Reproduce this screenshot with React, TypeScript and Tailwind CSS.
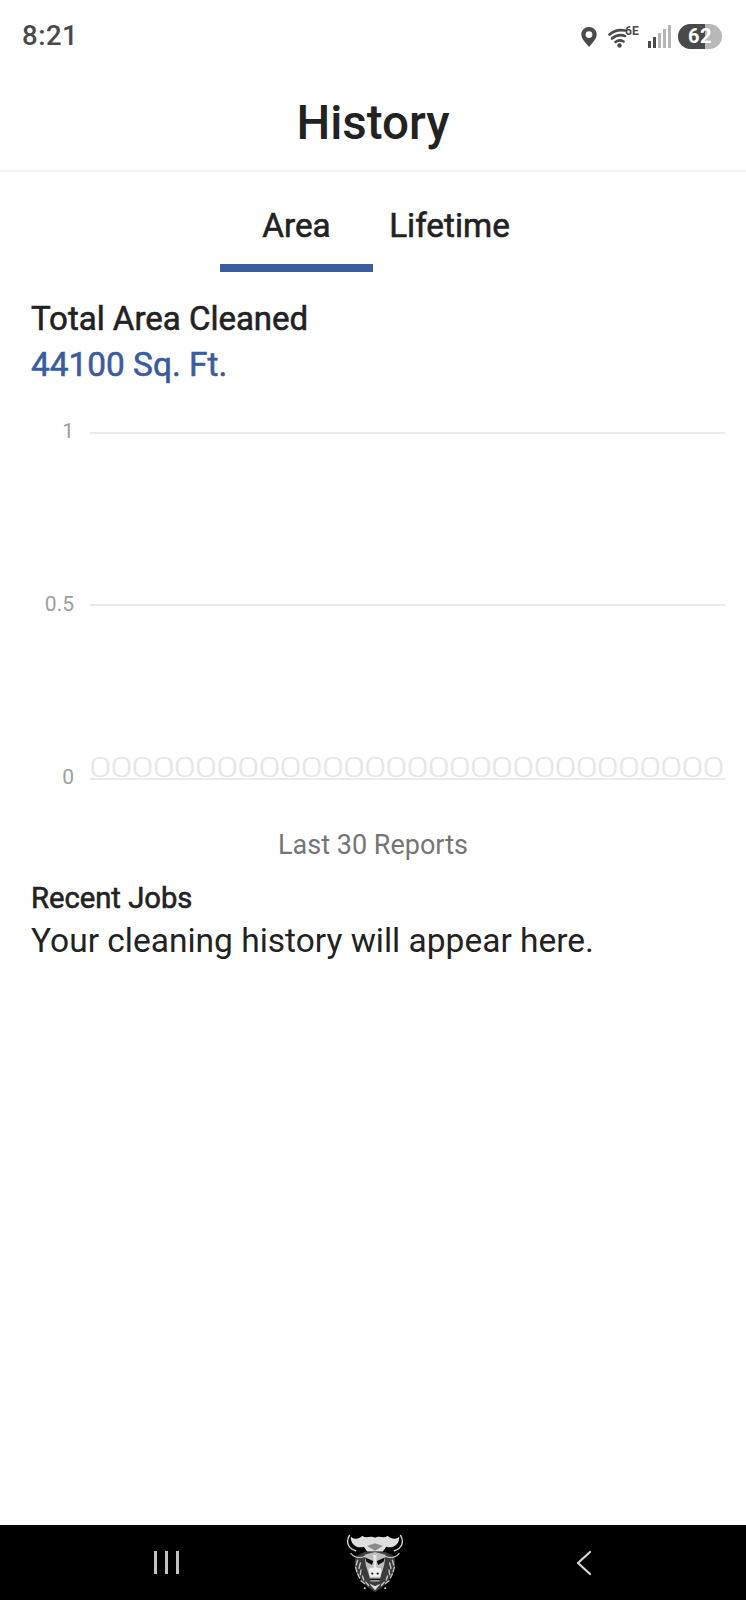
import React from 'react';

const FONT = { fontFamily: 'Roboto, "Noto Sans", sans-serif' };

const BLUE = '#3a5c9f';
const ZEROS = Array.from({ length: 30 }, (_, i) => i);

function StatusIcons() {
  return (
    <div className="flex items-center">
      {/* pin */}
      <svg width="18" height="22" viewBox="0 0 18 22" className="mr-[10px] mt-[1px]">
        <path
          fillRule="evenodd"
          d="M9 1C4.6 1 1.3 4.3 1.3 8.6c0 2.8 1.7 5.2 3.5 7.5L9 21l4.2-4.9c1.8-2.3 3.5-4.7 3.5-7.5C16.7 4.3 13.4 1 9 1zm0 11a3.4 3.4 0 1 1 0-6.8 3.4 3.4 0 0 1 0 6.8z"
          fill="#4a4a4a"
        />
      </svg>
      {/* wifi 6E */}
      <div className="relative w-[34px] h-[24px] mr-[6px]">
        <svg width="22" height="20" viewBox="0 0 22 20" className="absolute left-0 top-[4px]">
          <g fill="none" stroke="#4a4a4a" strokeWidth="2.6" strokeLinecap="round">
            <path d="M1.5 6.5C6 2.5 12 1.5 17 2.5" />
            <path d="M4 10.5C8 7 13 6.5 17 8" />
            <path d="M7.5 14C10 12 13 12 15.5 13.5" />
          </g>
          <circle cx="11.5" cy="17.5" r="2.2" fill="#4a4a4a" />
        </svg>
        <span className="absolute left-[17px] top-[0px] text-[12px] leading-[14px] font-bold text-[#4a4a4a]">6E</span>
      </div>
      {/* signal */}
      <svg width="23" height="23" viewBox="0 0 23 23" className="mr-[7px]">
        <rect x="0" y="16" width="3" height="7" fill="#4a4a4a" />
        <rect x="5" y="12" width="3" height="11" fill="#4a4a4a" />
        <rect x="10" y="8" width="3" height="15" fill="#b5b5b5" />
        <rect x="15" y="4" width="3" height="19" fill="#b5b5b5" />
        <rect x="20" y="0" width="3" height="23" fill="#b5b5b5" />
      </svg>
      {/* battery */}
      <div className="relative w-[44px] h-[25px] rounded-full bg-[#b8b8b8] overflow-hidden">
        <div className="absolute left-0 top-0 bottom-0 w-[27px] bg-[#4a4a4a]" />
        <span className="absolute inset-0 flex items-center justify-center text-[20px] font-bold tracking-[0.5px] text-white leading-none">62</span>
      </div>
    </div>
  );
}

function Chart() {
  const lines = [
    { y: 44, label: '1', dy: 5 },
    { y: 216, label: '0.5', dy: 6 },
    { y: 390, label: '0', dy: 5 },
  ];
  return (
    <svg width="746" height="435" viewBox="0 0 746 435" className="block">
      {lines.map((l) => (
        <g key={l.label}>
          <line x1="90" x2="725" y1={l.y} y2={l.y} stroke="#ebebeb" strokeWidth="2" />
          <text x="74" y={l.y + l.dy} textAnchor="end" fontSize="21" fill="#9e9e9e" style={FONT}>
            {l.label}
          </text>
        </g>
      ))}
      {ZEROS.map((i) => (
        <text
          key={i}
          transform={`translate(${89 + i * 21.15} 388) scale(1.5 1)`}
          fontSize="27"
          fontWeight="300"
          fill="#e6e6e6"
          style={FONT}
        >
          0
        </text>
      ))}
    </svg>
  );
}

const MANE_STROKES: [number, number, number, number][] = [
  [84, 104, 80, 118], [92, 112, 88, 128], [78, 124, 82, 138], [94, 132, 92, 146],
  [84, 144, 90, 156], [98, 150, 102, 162], [94, 164, 104, 172], [108, 168, 116, 178],
  [186, 104, 190, 118], [178, 112, 182, 128], [192, 124, 188, 138], [176, 132, 178, 146],
  [186, 144, 180, 156], [172, 150, 168, 162], [176, 164, 166, 172], [162, 168, 154, 178],
];

function BullLogo() {
  return (
    <svg width="58" height="60" viewBox="50 24 170 176">
      {/* mane silhouette */}
      <path d="M78 92C70 130 88 168 135 198C182 168 200 130 192 92L166 80H104Z" fill="#3c3c3c" />
      <g fill="none" stroke="#c4c4c4" strokeWidth="4" strokeLinecap="round">
        {MANE_STROKES.map(([x1, y1, x2, y2]) => (
          <path key={`${x1}-${y1}`} d={`M${x1} ${y1}L${x2} ${y2}`} />
        ))}
      </g>
      {/* horns */}
      <g fill="none" stroke="#d4d4d4" strokeWidth="4" strokeLinecap="round">
        <path d="M78 76C58 70 48 52 60 31" />
        <path d="M192 76C212 70 222 52 210 31" />
        <path d="M64 84C76 98 92 98 106 92" strokeWidth="3" />
        <path d="M206 84C194 98 178 98 164 92" strokeWidth="3" />
      </g>
      {/* top of the mane */}
      <path
        d="M64 34C62 56 82 72 102 64L112 78H158L168 64C188 72 208 56 206 34C198 44 182 42 172 32C160 42 150 30 135 38C120 30 110 42 98 32C88 42 72 44 64 34Z"
        fill="#dedede"
      />
      <path d="M112 62L135 54L158 62L135 76Z" fill="#8a8a8a" />
      {/* face */}
      <path d="M104 88L135 80L166 88L162 118L152 150L148 166H122L118 150L108 118Z" fill="#bdbdbd" />
      {/* brow and eyes */}
      <path d="M106 96L130 106L126 118L110 108Z" fill="#0c0c0c" />
      <path d="M164 96L140 106L144 118L160 108Z" fill="#0c0c0c" />
      <path d="M130 88H140L138 128H132Z" fill="#e6e6e6" />
      {/* muzzle */}
      <path d="M116 130C126 124 144 124 154 130L150 152H120Z" fill="#f0f0f0" />
      <circle cx="127" cy="143" r="3.4" fill="#222" />
      <circle cx="143" cy="143" r="3.4" fill="#222" />
      <path d="M120 160H150" stroke="#111" strokeWidth="5" />
      <path d="M118 172L135 192L152 172L135 180Z" fill="#e0e0e0" />
      <circle cx="105" cy="186" r="3" fill="#d0d0d0" />
      <circle cx="165" cy="186" r="3" fill="#d0d0d0" />
    </svg>
  );
}

export default function App() {
  return (
    <div className="w-[746px] h-[1600px] bg-white flex flex-col" style={FONT}>
      {/* Status bar */}
      <div className="h-[72px] shrink-0 flex items-center justify-between pl-[22px] pr-[24px]">
        <span className="text-[27.5px] font-medium tracking-[0.5px] text-[#4a4a4a]">8:21</span>
        <StatusIcons />
      </div>

      {/* Title */}
      <header className="h-[100px] shrink-0 flex items-center justify-center pt-[5px] border-b-2 border-[#f3f3f3]">
        <h1 className="text-[47.6px] font-medium text-[#222] leading-none">History</h1>
      </header>

      {/* Tabs */}
      <div className="flex justify-center shrink-0">
        <div className="w-[153px] h-[100px] flex flex-col items-center">
          <span className="mt-[31px] h-[61px] text-[33.3px] [-webkit-text-stroke:0.6px] text-[#222] leading-[46px]">Area</span>
          <div className="w-full h-[8px] bg-[#3a5c9f]" />
        </div>
        <div className="w-[153px] h-[100px] flex flex-col items-center">
          <span className="mt-[31px] text-[33.3px] [-webkit-text-stroke:0.6px] text-[#222] leading-[46px]">Lifetime</span>
        </div>
      </div>

      {/* Total */}
      <div className="pl-[31px] mt-[24px] shrink-0">
        <p className="text-[33px] [-webkit-text-stroke:0.6px] text-[#222] leading-[46px]">Total Area Cleaned</p>
        <p className="text-[33.4px] [-webkit-text-stroke:0.6px] leading-[46px]" style={{ color: BLUE }}>44100 Sq. Ft.</p>
      </div>

      {/* Chart */}
      <div className="mt-[1px] shrink-0">
        <Chart />
      </div>

      <p className="mt-[3px] text-center text-[27px] leading-[36px] text-[#757575]">Last 30 Reports</p>

      <div className="pl-[31px] mt-[15px]">
        <p className="text-[29.2px] [-webkit-text-stroke:0.6px] text-[#222] leading-[40px]">Recent Jobs</p>
        <p className="mt-[1px] text-[33.5px] text-[#222] leading-[44px]">Your cleaning history will appear here.</p>
      </div>

      {/* Nav bar */}
      <nav className="mt-auto h-[75px] shrink-0 bg-black flex items-center justify-center pl-[4px]">
        <div className="w-[209px] flex justify-center gap-[8px]">
          <div className="w-[3px] h-[23px] bg-[#c4c4c4]" />
          <div className="w-[3px] h-[23px] bg-[#c4c4c4]" />
          <div className="w-[3px] h-[23px] bg-[#c4c4c4]" />
        </div>
        <div className="w-[209px] flex justify-center">
          <BullLogo />
        </div>
        <div className="w-[209px] flex justify-center">
          <svg width="16" height="26" viewBox="0 0 16 26">
            <path d="M14 2L2 13L14 24" fill="none" stroke="#d8d8d8" strokeWidth="2.2" strokeLinecap="round" strokeLinejoin="round" />
          </svg>
        </div>
      </nav>
    </div>
  );
}
